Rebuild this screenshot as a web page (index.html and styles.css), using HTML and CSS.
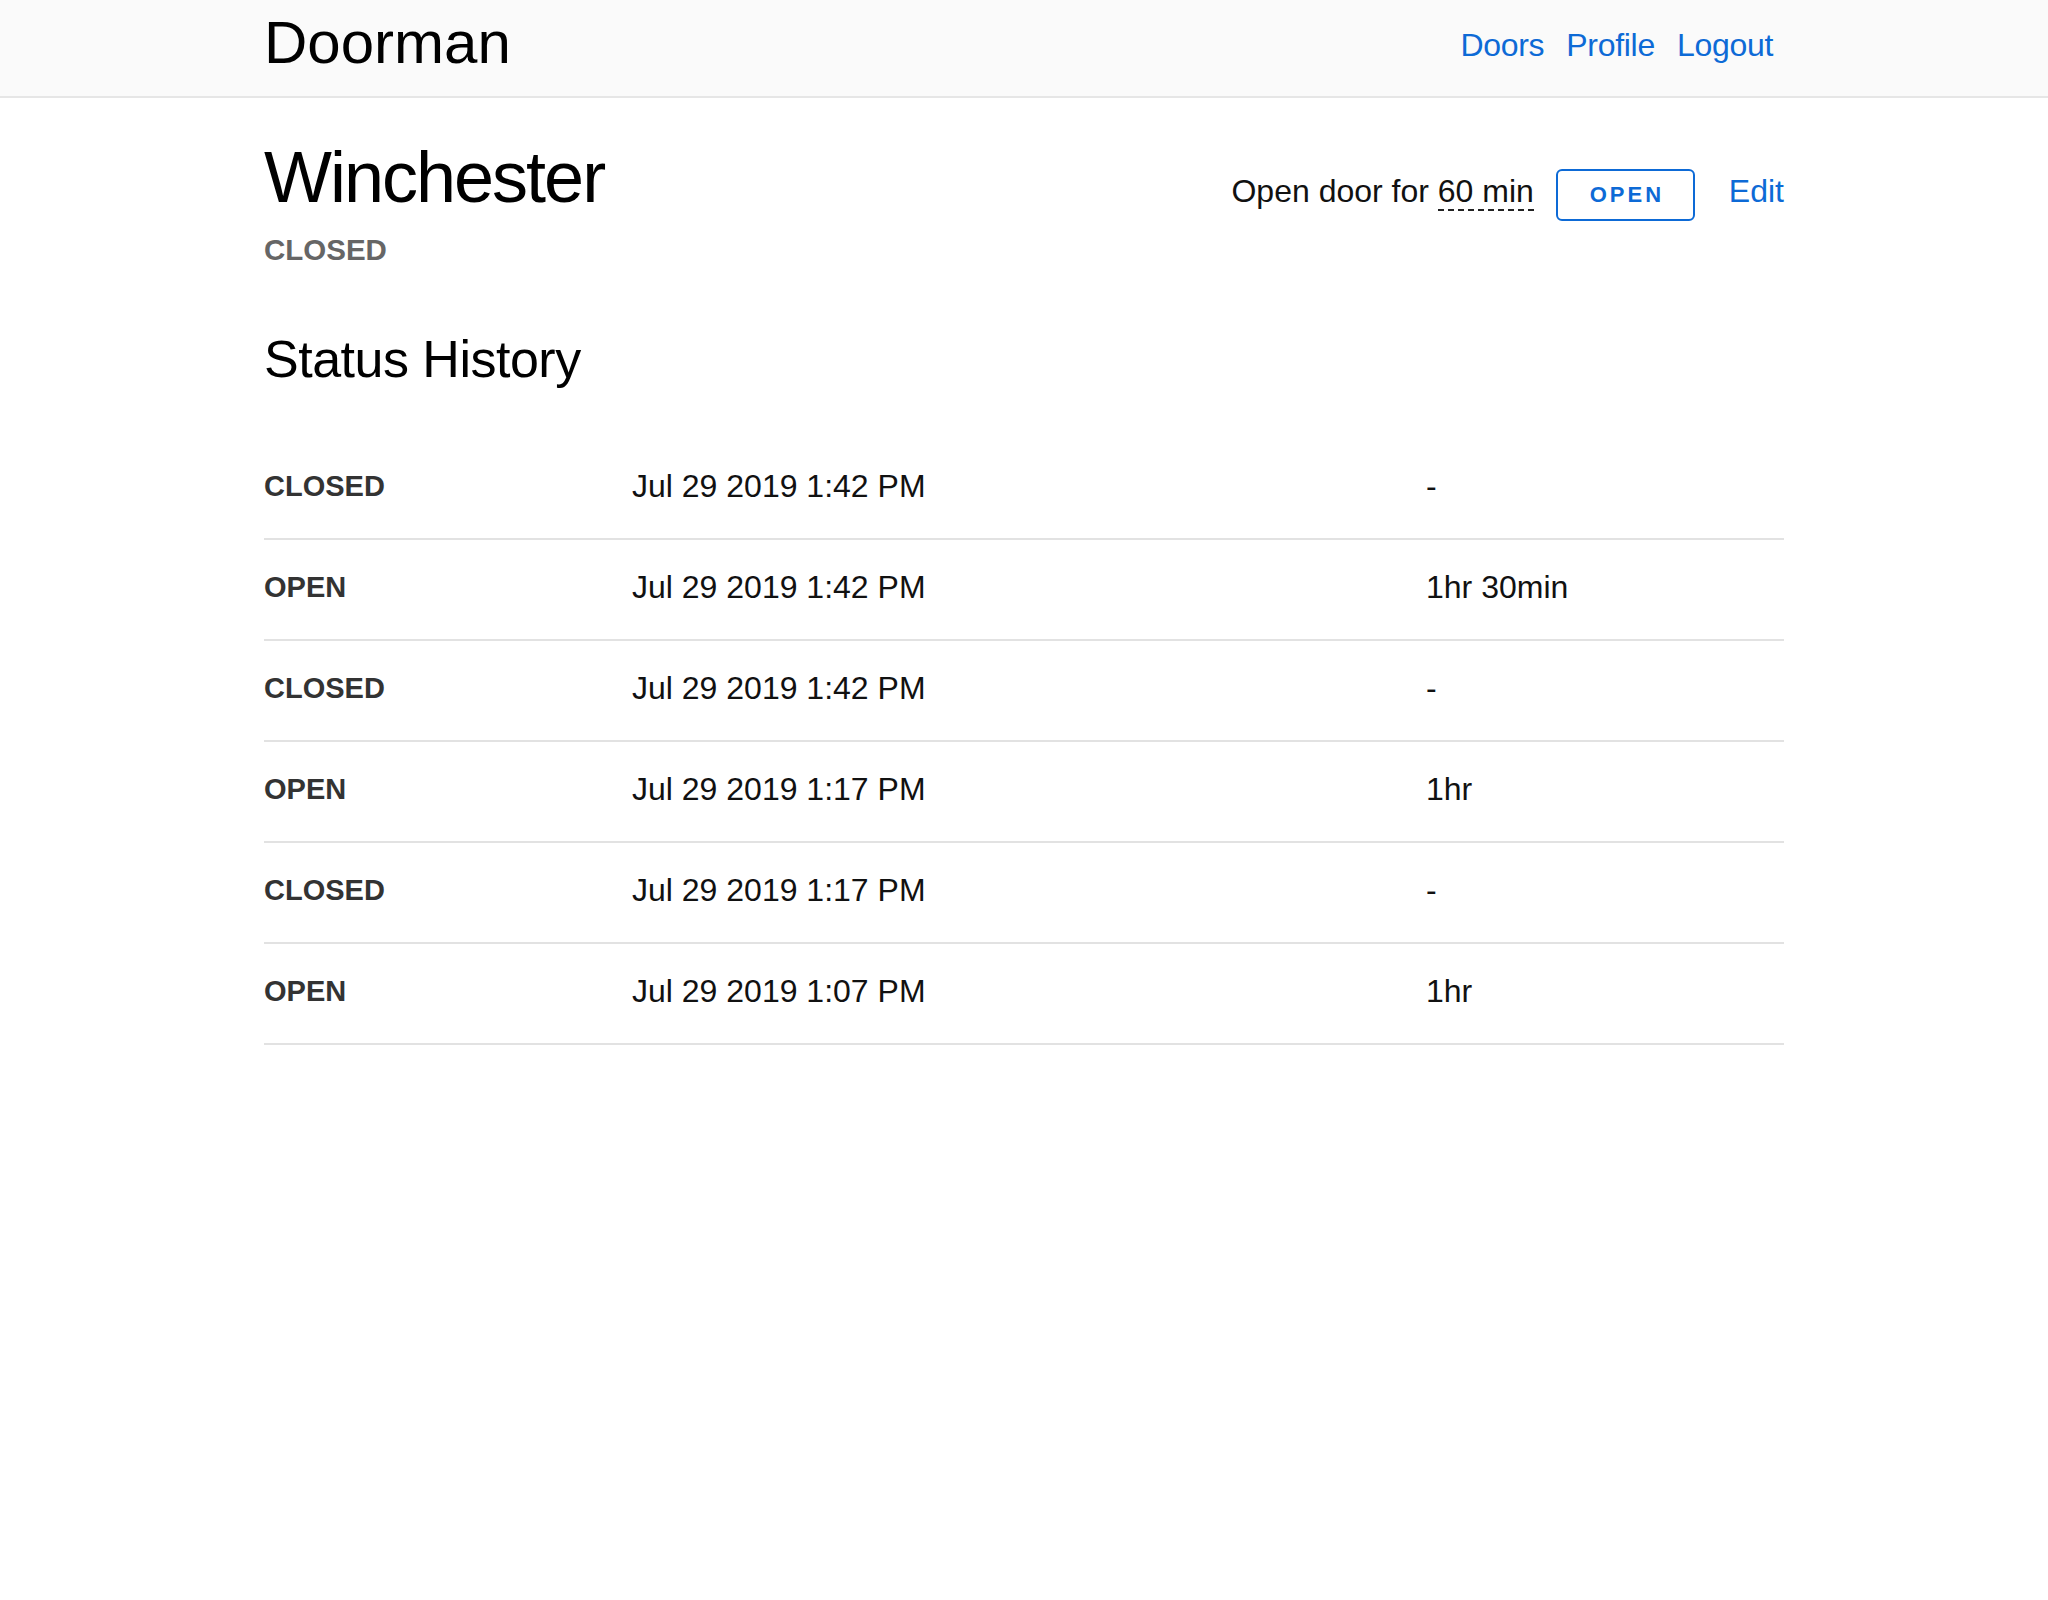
FILE: index.html
```html
<!DOCTYPE html>
<html lang="en">
<head>
<meta charset="utf-8">
<title>Doorman</title>
<link rel="stylesheet" href="styles.css">
</head>
<body>
<header class="topbar">
  <div class="container topbar-inner">
    <div class="brand">Doorman</div>
    <nav class="nav">
      <a href="#" class="nav-link">Doors</a>
      <a href="#" class="nav-link">Profile</a>
      <a href="#" class="nav-link">Logout</a>
    </nav>
  </div>
</header>
<main class="container main">
  <section class="door-head">
    <div class="door-title">
      <h1 class="door-name">Winchester</h1>
      <div class="door-status">CLOSED</div>
    </div>
    <div class="door-actions">
      <span class="open-label">Open door for <span class="duration">60 min</span></span>
      <button class="open-btn" type="button">OPEN</button>
      <a href="#" class="edit-link">Edit</a>
    </div>
  </section>
  <h2 class="section-title">Status History</h2>
  <div class="history">
    <div class="row"><span class="state">CLOSED</span><span class="time">Jul 29 2019 1:42 PM</span><span class="dur">-</span></div>
    <div class="row"><span class="state">OPEN</span><span class="time">Jul 29 2019 1:42 PM</span><span class="dur">1hr 30min</span></div>
    <div class="row"><span class="state">CLOSED</span><span class="time">Jul 29 2019 1:42 PM</span><span class="dur">-</span></div>
    <div class="row"><span class="state">OPEN</span><span class="time">Jul 29 2019 1:17 PM</span><span class="dur">1hr</span></div>
    <div class="row"><span class="state">CLOSED</span><span class="time">Jul 29 2019 1:17 PM</span><span class="dur">-</span></div>
    <div class="row"><span class="state">OPEN</span><span class="time">Jul 29 2019 1:07 PM</span><span class="dur">1hr</span></div>
  </div>
</main>
</body>
</html>
```

FILE: styles.css
```css
html, body {
  margin: 0;
  padding: 0;
  background: #ffffff;
  color: #111111;
  font-family: "Liberation Sans", Arial, Helvetica, sans-serif;
  font-size: 32px;
  line-height: 40px;
}

.container {
  width: 1520px;
  margin: 0 auto;
}

.topbar {
  background: #fafafa;
  border-bottom: 2px solid #e6e6e6;
  height: 96px;
}

.topbar-inner {
  display: flex;
  justify-content: space-between;
  align-items: flex-start;
  padding-top: 8px;
}

.brand {
  font-size: 60px;
  line-height: 70px;
  color: #000000;
}

.nav {
  display: flex;
  margin-top: 17px;
}

.nav-link {
  color: #0d6ad6;
  text-decoration: none;
  padding: 0 11px;
  letter-spacing: -0.3px;
}

.main {
  padding-top: 39px;
}

.door-head {
  display: flex;
  justify-content: space-between;
  align-items: flex-start;
}

.door-name {
  margin: 0;
  font-size: 72px;
  line-height: 80px;
  font-weight: 400;
  letter-spacing: -2px;
  color: #000000;
}

.door-status {
  margin-top: 15px;
  font-size: 29.5px;
  line-height: 36px;
  font-weight: 700;
  color: #666666;
}

.door-actions {
  display: flex;
  align-items: baseline;
  margin-top: 32px;
}

.open-label {
  color: #111111;
}

.duration {
  border-bottom: 2px dashed #222222;
}

.open-btn {
  margin-left: 22px;
  width: 139px;
  height: 52px;
  padding: 0 0 0 3px;
  border: 2px solid #0d6ad6;
  border-radius: 6px;
  background: #ffffff;
  color: #0d6ad6;
  font-family: "Liberation Sans", Arial, sans-serif;
  font-size: 22px;
  line-height: 48px;
  font-weight: 700;
  letter-spacing: 3px;
}

.edit-link {
  margin-left: 34px;
  color: #0d6ad6;
  text-decoration: none;
}

.section-title {
  margin: 61px 0 0 0;
  font-size: 52px;
  line-height: 60px;
  font-weight: 400;
  letter-spacing: -0.5px;
  color: #000000;
}

.history {
  margin-top: 50px;
}

.row {
  display: grid;
  grid-template-columns: 368px 794px 1fr;
  padding: 27px 0 32px 0;
  border-bottom: 2px solid #e2e2e2;
}

.state {
  font-size: 29px;
  font-weight: 700;
  color: #333333;
}

.time, .dur {
  color: #111111;
}
```
